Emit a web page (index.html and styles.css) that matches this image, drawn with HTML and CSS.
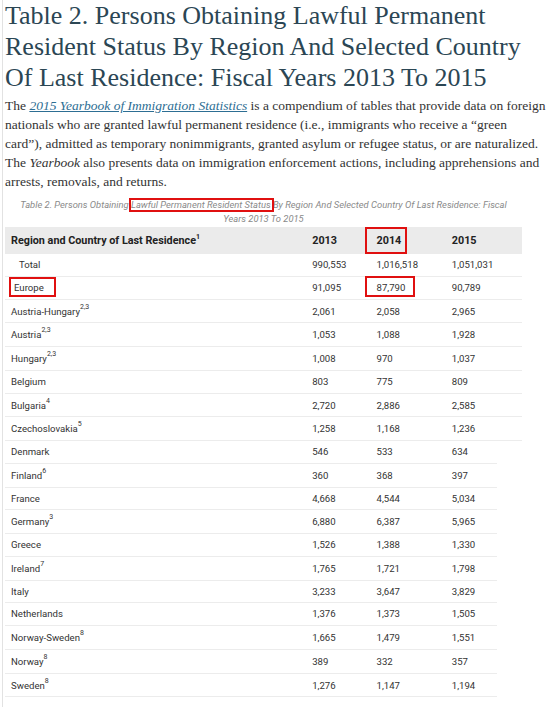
FILE: index.html
```html
<!DOCTYPE html>
<html lang="en">
<head>
<meta charset="utf-8">
<title>Table 2. Persons Obtaining Lawful Permanent Resident Status</title>
<link rel="stylesheet" href="styles.css">
</head>
<body>
<div class="page">
  <h1 class="title">Table 2. Persons Obtaining Lawful Permanent Resident Status By Region And Selected Country Of Last Residence: Fiscal Years 2013 To 2015</h1>
  <p class="intro">The <a class="link" href="#">2015 Yearbook of Immigration Statistics</a> is a compendium of tables that provide data on foreign nationals who are granted lawful permanent residence (i.e., immigrants who receive a “green<br>card”), admitted as temporary nonimmigrants, granted asylum or refugee status, or are naturalized. The <em>Yearbook</em> also presents data on immigration enforcement actions, including apprehensions and arrests, removals, and returns.</p>
  <table class="data">
    <caption class="cap">Table 2. Persons Obtaining <span class="mark mark-cap">Lawful Permanent Resident Status</span> By Region And Selected Country Of Last Residence: Fiscal Years 2013 To 2015</caption>
    <thead>
      <tr class="wide">
        <th class="c-name">Region and Country of Last Residence<sup>1</sup></th>
        <th class="c-y1">2013</th>
        <th class="c-y2"><span class="mark mark-head">2014</span></th>
        <th class="c-y3">2015</th>
        <th class="c-pad"></th>
      </tr>
    </thead>
    <tbody>
      <tr class="wide"><td class="c-name ind2">Total</td><td>990,553</td><td>1,016,518</td><td>1,051,031</td><td class="c-pad"></td></tr>
      <tr class="wide"><td class="c-name ind1"><span class="mark mark-eu">Europe</span></td><td>91,095</td><td><span class="mark mark-num">87,790</span></td><td>90,789</td><td class="c-pad"></td></tr>
      <tr class="wide"><td class="c-name">Austria-Hungary<sup>2,3</sup></td><td>2,061</td><td>2,058</td><td>2,965</td><td class="c-pad"></td></tr>
      <tr class="wide"><td class="c-name">Austria<sup>2,3</sup></td><td>1,053</td><td>1,088</td><td>1,928</td><td class="c-pad"></td></tr>
      <tr class="wide"><td class="c-name">Hungary<sup>2,3</sup></td><td>1,008</td><td>970</td><td>1,037</td><td class="c-pad"></td></tr>
      <tr class="wide"><td class="c-name">Belgium</td><td>803</td><td>775</td><td>809</td><td class="c-pad"></td></tr>
      <tr class="wide"><td class="c-name">Bulgaria<sup>4</sup></td><td>2,720</td><td>2,886</td><td>2,585</td><td class="c-pad"></td></tr>
      <tr class="wide"><td class="c-name">Czechoslovakia<sup>5</sup></td><td>1,258</td><td>1,168</td><td>1,236</td><td class="c-pad"></td></tr>
      <tr><td class="c-name">Denmark</td><td>546</td><td>533</td><td>634</td><td class="c-pad"></td></tr>
      <tr><td class="c-name">Finland<sup>6</sup></td><td>360</td><td>368</td><td>397</td><td class="c-pad"></td></tr>
      <tr><td class="c-name">France</td><td>4,668</td><td>4,544</td><td>5,034</td><td class="c-pad"></td></tr>
      <tr><td class="c-name">Germany<sup>3</sup></td><td>6,880</td><td>6,387</td><td>5,965</td><td class="c-pad"></td></tr>
      <tr><td class="c-name">Greece</td><td>1,526</td><td>1,388</td><td>1,330</td><td class="c-pad"></td></tr>
      <tr><td class="c-name">Ireland<sup>7</sup></td><td>1,765</td><td>1,721</td><td>1,798</td><td class="c-pad"></td></tr>
      <tr><td class="c-name">Italy</td><td>3,233</td><td>3,647</td><td>3,829</td><td class="c-pad"></td></tr>
      <tr><td class="c-name">Netherlands</td><td>1,376</td><td>1,373</td><td>1,505</td><td class="c-pad"></td></tr>
      <tr><td class="c-name">Norway-Sweden<sup>8</sup></td><td>1,665</td><td>1,479</td><td>1,551</td><td class="c-pad"></td></tr>
      <tr><td class="c-name">Norway<sup>8</sup></td><td>389</td><td>332</td><td>357</td><td class="c-pad"></td></tr>
      <tr><td class="c-name">Sweden<sup>8</sup></td><td>1,276</td><td>1,147</td><td>1,194</td><td class="c-pad"></td></tr>
    </tbody>
  </table>
</div>
</body>
</html>
```
FILE: styles.css
```css
html, body {
  margin: 0;
  padding: 0;
  background: #ffffff;
}

.page {
  margin-left: 2px;
  border-left: 1px solid #e2e2e2;
  padding-left: 2px;
  min-height: 707px;
}

.title {
  margin: 0;
  font-family: "Liberation Serif", "DejaVu Serif", serif;
  font-weight: normal;
  font-size: 26px;
  line-height: 31px;
  color: #2b4654;
  padding-right: 6px;
}

.intro {
  margin: 3px 0 0 0;
  font-family: "Liberation Serif", serif;
  font-size: 13.5px;
  line-height: 19px;
  color: #333333;
}

.link {
  color: #2d6e93;
  font-style: italic;
  text-decoration: underline;
}

.intro em {
  font-style: italic;
}

.data {
  margin-top: 7px;
  border-collapse: collapse;
  width: 517px;
  font-family: Roboto, "Liberation Sans", sans-serif;
  font-size: 9.6px;
  color: #333333;
}

.cap {
  font-style: italic;
  font-size: 9.4px;
  line-height: 14px;
  color: #8a8a8a;
  padding: 0 6px 1px;
  text-align: center;
}

.data th {
  background: #ebebeb;
  text-align: left;
  font-weight: bold;
  font-size: 10.8px;
  color: #222222;
  padding: 7px 0 6px 5px;
  line-height: 14px;
}

.data th.c-name {
  padding-left: 6px;
}

.data td {
  padding: 4px 0 4px 5px;
  line-height: 13.75px;
  border-bottom: 1px solid #ececec;
  white-space: nowrap;
  vertical-align: bottom;
}

.data td.c-name {
  padding-left: 6px;
}

.c-name { width: 294px; }
.c-y1 { width: 60px; }
.c-y2 { width: 71px; }
.c-y3 { width: 45px; }
.data .c-pad { width: 26px; padding: 0; }

.data tr:not(.wide) td.c-pad {
  border-bottom-color: transparent;
}

.data td.ind1 { padding-left: 9px; }
.data td.ind2 { padding-left: 14px; }

.data sup {
  font-size: 7px;
  line-height: 7px;
  vertical-align: 5px;
}

.data tbody sup {
  vertical-align: 6px;
}

.mark {
  position: relative;
}

.mark::after {
  content: "";
  position: absolute;
  border: 2px solid #e01010;
  pointer-events: none;
}

.mark-cap::after {
  left: -2px;
  right: -3px;
  top: -1px;
  bottom: -2px;
}

.mark-head::after {
  left: -12px;
  right: -6px;
  top: -7px;
  bottom: -7px;
}

.mark-eu::after {
  left: -5px;
  right: -12px;
  top: -5px;
  bottom: -4px;
}

.mark-num::after {
  left: -12px;
  right: -10px;
  top: -6px;
  bottom: -4px;
}
```
